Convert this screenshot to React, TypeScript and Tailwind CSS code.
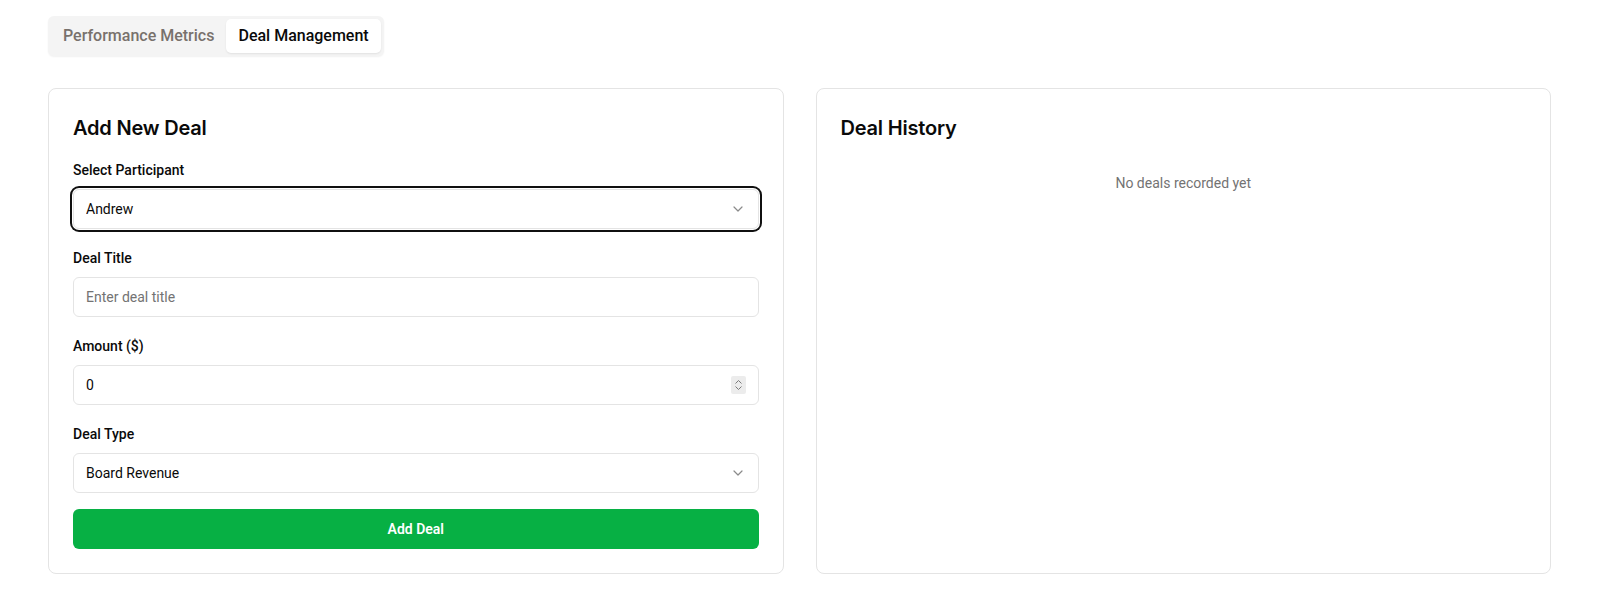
import { useState } from "react";

const participants = ["Andrew", "Bella", "Chris", "Dana"];
const dealTypes = ["Board Revenue", "Sponsorship", "Membership"];

function Chevron() {
  return (
    <svg width="10" height="6" viewBox="0 0 10 6" fill="none" className="pointer-events-none absolute right-4 top-1/2 -translate-y-1/2">
      <path d="M1 1l4 4 4-4" stroke="#8a8a8a" strokeWidth="1.2" strokeLinecap="round" strokeLinejoin="round" />
    </svg>
  );
}

function Label({ children }: { children: React.ReactNode }) {
  return <label className="block text-sm font-medium leading-5 text-[#0a0a0a] mb-[9px]">{children}</label>;
}

export default function App() {
  const [tab, setTab] = useState("deals");
  const [participant, setParticipant] = useState("Andrew");
  const [title, setTitle] = useState("");
  const [amount, setAmount] = useState("0");
  const [dealType, setDealType] = useState("Board Revenue");

  return (
    <div className="min-h-screen bg-white pl-12 pr-[53px] pt-4 pb-8 font-['Roboto',sans-serif] text-[#0a0a0a]">
      {/* Tabs */}
      <div className="inline-flex items-center h-10 p-[3px] rounded-md bg-[#f4f4f4] shadow-[0_1px_2px_rgba(0,0,0,0.06)]">
        <button
          onClick={() => setTab("metrics")}
          className={`h-[34px] px-3 rounded-[5px] text-base font-medium ${tab === "metrics" ? "bg-white text-[#0a0a0a] shadow-sm" : "text-[#78716c]"}`}
        >
          Performance Metrics
        </button>
        <button
          onClick={() => setTab("deals")}
          className={`h-[34px] px-3 rounded-[5px] text-base font-medium ${tab === "deals" ? "bg-white text-[#0a0a0a] shadow-[0_1px_2px_rgba(0,0,0,0.08)]" : "text-[#78716c]"}`}
        >
          Deal Management
        </button>
      </div>

      <div className="grid grid-cols-2 gap-8 mt-8">
        {/* Add New Deal */}
        <div className="rounded-lg border border-[#e4e4e4] p-6 bg-white">
          <h2 className="font-['Inter',sans-serif] text-xl font-semibold leading-[30px] tracking-[-0.01em] mb-[17px]">Add New Deal</h2>

          <div className="mb-[19px]">
            <Label>Select Participant</Label>
            <div className="relative">
              <select
                value={participant}
                onChange={(e) => setParticipant(e.target.value)}
                className="appearance-none w-full h-10 rounded-md border border-[#e4e4e4] bg-white px-3 text-sm outline-none ring-2 ring-[#101010] ring-offset-1"
              >
                {participants.map((p) => (
                  <option key={p}>{p}</option>
                ))}
              </select>
              <Chevron />
            </div>
          </div>

          <div className="mb-[19px]">
            <Label>Deal Title</Label>
            <input
              value={title}
              onChange={(e) => setTitle(e.target.value)}
              placeholder="Enter deal title"
              className="w-full h-10 rounded-md border border-[#e4e4e4] bg-white px-3 text-sm outline-none placeholder:text-[#737373]"
            />
          </div>

          <div className="mb-[19px]">
            <Label>Amount ($)</Label>
            <div className="relative">
              <input
                value={amount}
                onChange={(e) => setAmount(e.target.value)}
                className="w-full h-10 rounded-md border border-[#e4e4e4] bg-white px-3 text-sm outline-none"
              />
              <div className="absolute right-[13px] top-1/2 -translate-y-1/2 w-[15px] h-[18px] bg-[#ececec] rounded-[2px] flex flex-col items-center justify-center gap-[2px]">
                <svg width="7" height="4" viewBox="0 0 7 4" fill="none">
                  <path d="M0.5 3.5l3-3 3 3" stroke="#7a7a7a" strokeWidth="1" />
                </svg>
                <svg width="7" height="4" viewBox="0 0 7 4" fill="none">
                  <path d="M0.5 0.5l3 3 3-3" stroke="#7a7a7a" strokeWidth="1" />
                </svg>
              </div>
            </div>
          </div>

          <div className="mb-4">
            <Label>Deal Type</Label>
            <div className="relative">
              <select
                value={dealType}
                onChange={(e) => setDealType(e.target.value)}
                className="appearance-none w-full h-10 rounded-md border border-[#e4e4e4] bg-white px-3 text-sm outline-none"
              >
                {dealTypes.map((d) => (
                  <option key={d}>{d}</option>
                ))}
              </select>
              <Chevron />
            </div>
          </div>

          <button className="w-full h-10 rounded-md bg-[#07b044] text-white text-sm font-semibold">Add Deal</button>
        </div>

        {/* Deal History */}
        <div className="rounded-lg border border-[#e4e4e4] p-6 bg-white">
          <h2 className="font-['Inter',sans-serif] text-xl font-semibold leading-[30px] tracking-[-0.01em]">Deal History</h2>
          <p className="mt-[30px] text-center text-sm leading-5 text-[#737373]">No deals recorded yet</p>
        </div>
      </div>
    </div>
  );
}
